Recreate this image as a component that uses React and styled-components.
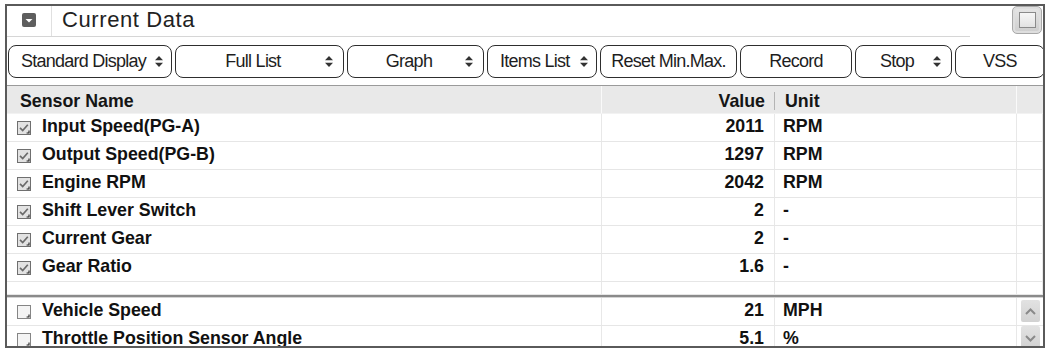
import React from "react";
import styled, { createGlobalStyle } from "styled-components";

const GlobalStyle = createGlobalStyle`
  body {
    margin: 0;
    background: #fff;
    font-family: "Liberation Sans", Arial, sans-serif;
    color: #111;
  }
`;

const buttons = [
  { label: "Standard Display", width: 164, spin: true, tight: true },
  { label: "Full List", width: 169, spin: true },
  { label: "Graph", width: 137, spin: true },
  { label: "Items List", width: 110, spin: true, tight: true },
  { label: "Reset Min.Max.", width: 137 },
  { label: "Record", width: 112 },
  { label: "Stop", width: 97, spin: true },
  { label: "VSS", width: 90 },
];

const rows = [
  { name: "Input Speed(PG-A)", value: "2011", unit: "RPM" },
  { name: "Output Speed(PG-B)", value: "1297", unit: "RPM" },
  { name: "Engine RPM", value: "2042", unit: "RPM" },
  { name: "Shift Lever Switch", value: "2", unit: "-" },
  { name: "Current Gear", value: "2", unit: "-" },
  { name: "Gear Ratio", value: "1.6", unit: "-" },
];

const extraRows = [
  { name: "Vehicle Speed", value: "21", unit: "MPH", scroll: "up" },
  { name: "Throttle Position Sensor Angle", value: "5.1", unit: "%", scroll: "down" },
];

function Spinner() {
  return (
    <svg width="8" height="11" viewBox="0 0 8 11">
      <polygon points="4,0 8,4.2 0,4.2" fill="#333" />
      <polygon points="0,6.8 8,6.8 4,11" fill="#333" />
    </svg>
  );
}

function CheckBox({ checked }) {
  return (
    <svg width="14" height="14" viewBox="0 0 14 14">
      <rect
        x="0.5"
        y="0.5"
        width="13"
        height="13"
        fill={checked ? "#e2e2e2" : "#f4f4f4"}
        stroke={checked ? "#6f6f6f" : "#858585"}
      />
      {checked && (
        <path d="M3 6.8 L5.7 9.5 L10.8 3.8" stroke="#6a6a6a" strokeWidth="1.7" fill="none" />
      )}
      <path d="M9.6 12 H12 V9.6" stroke="#222" strokeWidth="1.1" fill="none" />
    </svg>
  );
}

function Chevron({ dir }) {
  const d = dir === "up" ? "M5 13 L9.5 8.5 L14 13" : "M5 9 L9.5 13.5 L14 9";
  return (
    <svg width="19" height="21" viewBox="0 0 19 21">
      <path d={d} stroke="#8a8a8a" strokeWidth="2" fill="none" />
    </svg>
  );
}

export default function App() {
  return (
    <>
      <GlobalStyle />
      <Frame>
        <TitleBar>
          <TitleMain>
            <IconCell>
              <svg width="14" height="14" viewBox="0 0 14 14">
                <rect x="0" y="0" width="14" height="14" rx="2" fill="#5e5e5e" />
                <polygon points="3.5,6 10.5,6 7,9.5" fill="#fff" />
              </svg>
            </IconCell>
            <Title>Current Data</Title>
          </TitleMain>
          <CornerBox>
            <CornerInner />
          </CornerBox>
        </TitleBar>

        <Toolbar>
          {buttons.map((b) => (
            <ToolButton key={b.label} style={{ width: b.width }} $tight={b.tight}>
              <ButtonLabel $tight={b.tight}>{b.label}</ButtonLabel>
              {b.spin && <Spinner />}
            </ToolButton>
          ))}
        </Toolbar>

        <HeaderRow>
          <HeadCell $line="#fafafa" $pad="0 0 0 13px">Sensor Name</HeadCell>
          <HeadCell $align="flex-end" $pad="0 9px 0 0">
            Value
            <HeadDivider />
          </HeadCell>
          <HeadCell $line="#fafafa" $pad="0 0 0 10px">Unit</HeadCell>
          <HeadCell />
        </HeaderRow>

        {rows.map((r) => (
          <Row key={r.name}>
            <NameCell>
              <CheckBox checked />
              <span>{r.name}</span>
            </NameCell>
            <ValueCell>{r.value}</ValueCell>
            <UnitCell>{r.unit}</UnitCell>
            <Cell />
          </Row>
        ))}

        <Row $height={13}>
          <Cell />
          <Cell />
          <Cell />
          <Cell />
        </Row>

        <Splitter />

        {extraRows.map((r) => (
          <Row key={r.name}>
            <NameCell>
              <CheckBox />
              <span>{r.name}</span>
            </NameCell>
            <ValueCell>{r.value}</ValueCell>
            <UnitCell>{r.unit}</UnitCell>
            <ScrollCell $dir={r.scroll}>
              <ScrollButton>
                <Chevron dir={r.scroll} />
              </ScrollButton>
            </ScrollCell>
          </Row>
        ))}
      </Frame>
    </>
  );
}

const Frame = styled.div`
  box-sizing: border-box;
  margin: 4px 0 0 5px;
  width: 1040px;
  height: 344px;
  border: 2px solid #5a5a5a;
  overflow: hidden;
  background: #fff;
`;

const TitleBar = styled.div`
  display: flex;
  height: 31px;
`;

const TitleMain = styled.div`
  display: flex;
  align-items: stretch;
  flex: 0 0 963px;
  border-bottom: 1px solid #d6d6d6;
`;

const IconCell = styled.div`
  width: 44px;
  display: flex;
  align-items: center;
  justify-content: center;
  border-right: 1px solid #e0e0e0;
  padding-bottom: 2px;
`;

const Title = styled.div`
  display: flex;
  align-items: center;
  padding: 0 0 3px 10px;
  font-size: 22px;
  letter-spacing: 0.6px;
  color: #222;
`;

const CornerBox = styled.div`
  box-sizing: border-box;
  margin: 0 1px 0 auto;
  width: 30px;
  height: 28px;
  border-radius: 5px;
  border: 1px solid #a8a8a8;
  background: linear-gradient(#e6e6e6, #cdcdcd);
  box-shadow: inset 0 0 0 2px #dedede;
  display: flex;
  align-items: center;
  justify-content: center;
`;

const CornerInner = styled.div`
  box-sizing: border-box;
  width: 17px;
  height: 16px;
  border: 1.5px solid #8a8a8a;
  background: linear-gradient(#f6f6f6, #e2e2e2);
`;

const Toolbar = styled.div`
  display: flex;
  gap: 3px;
  padding: 8px 0 7px 1px;
  border-bottom: 1px solid #9a9a9a;
  overflow: hidden;
`;

const ToolButton = styled.div`
  box-sizing: border-box;
  flex: none;
  height: 33px;
  display: flex;
  align-items: center;
  gap: 5px;
  padding: 0 ${({ $tight }) => ($tight ? "8px 0 12px" : "10px 0 10px")};
  border: 1.5px solid #2e2e2e;
  border-radius: 8px;
  background: #fff;
`;

const ButtonLabel = styled.span`
  flex: 1;
  text-align: ${({ $tight }) => ($tight ? "left" : "center")};
  font-size: 18px;
  letter-spacing: -0.75px;
  color: #1e1e1e;
  white-space: nowrap;
`;

const gridCols = "595px 173px 242px 26px";

const HeaderRow = styled.div`
  display: grid;
  grid-template-columns: ${gridCols};
  height: 28px;
  background: #e9e9e9;
  border-bottom: 1px solid #f2f2f2;
  box-sizing: border-box;
`;

const HeadCell = styled.div`
  position: relative;
  display: flex;
  align-items: center;
  justify-content: ${({ $align }) => $align || "flex-start"};
  padding: ${({ $pad }) => $pad || "0"};
  padding-top: 4px;
  border-right: 1px solid ${({ $line }) => $line || "transparent"};
  font-weight: bold;
  font-size: 17.8px;
  color: #151515;
`;

const HeadDivider = styled.span`
  position: absolute;
  right: -1px;
  top: 6px;
  bottom: 3px;
  width: 1px;
  background: #b4b4b4;
`;

const Row = styled.div`
  display: grid;
  grid-template-columns: ${gridCols};
  height: ${({ $height }) => $height || 28}px;
  box-sizing: border-box;
  border-bottom: 1px solid #e6e6e6;
`;

const Cell = styled.div`
  display: flex;
  align-items: center;
  padding-bottom: 2px;
  border-right: 1px solid #e8e8e8;
  font-weight: bold;
  font-size: 17.8px;
  color: #111;
  white-space: nowrap;
`;

const NameCell = styled(Cell)`
  gap: 11px;
  padding-left: 10px;

  svg {
    flex: none;
    margin-top: 2px;
  }
`;

const ValueCell = styled(Cell)`
  justify-content: flex-end;
  padding-right: 10px;
`;

const UnitCell = styled(Cell)`
  padding-left: 8px;
`;

const ScrollCell = styled.div`
  display: flex;
  justify-content: center;
  align-items: ${({ $dir }) => ($dir === "up" ? "flex-end" : "flex-start")};
  padding: ${({ $dir }) => ($dir === "up" ? "0 0 3px" : "0")};
`;

const ScrollButton = styled.div`
  width: 19px;
  height: 22px;
  border-radius: 2px;
  background: linear-gradient(#e2e2e2, #d2d2d2);
  display: flex;
  align-items: center;
  justify-content: center;
`;

const Splitter = styled.div`
  height: 3px;
  background: linear-gradient(#8a8a8a 0 2px, #d4d4d4 2px 3px);
`;
